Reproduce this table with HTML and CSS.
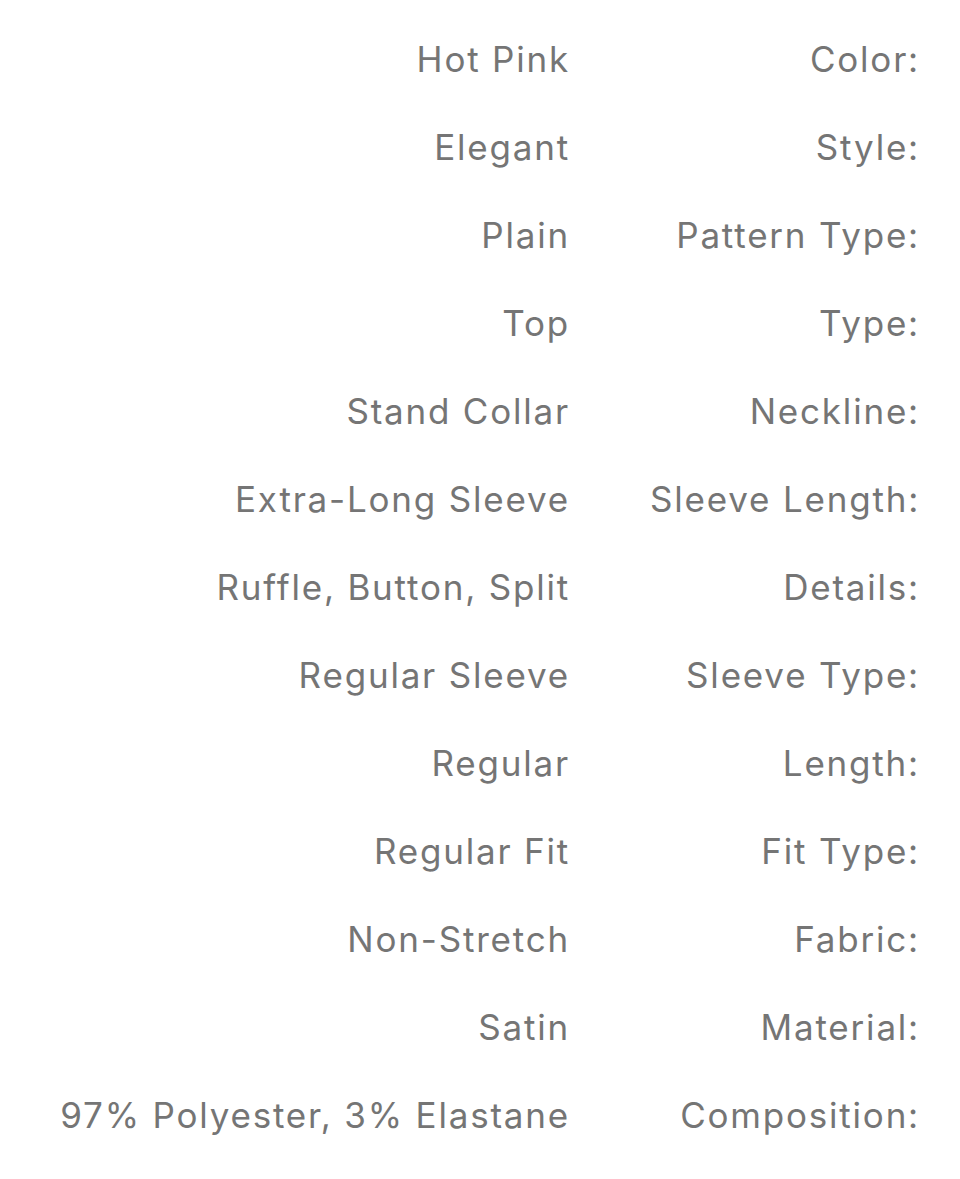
FILE: index.html
```html
<!DOCTYPE html>
<html>
<head>
<meta charset="utf-8">
<link rel="stylesheet" href="styles.css">
</head>
<body>
<div class="specs">
  <div class="val">Hot Pink</div><div class="key">Color:</div>
  <div class="val">Elegant</div><div class="key">Style:</div>
  <div class="val">Plain</div><div class="key">Pattern Type:</div>
  <div class="val">Top</div><div class="key">Type:</div>
  <div class="val">Stand Collar</div><div class="key">Neckline:</div>
  <div class="val">Extra-Long Sleeve</div><div class="key">Sleeve Length:</div>
  <div class="val">Ruffle, Button, Split</div><div class="key">Details:</div>
  <div class="val">Regular Sleeve</div><div class="key">Sleeve Type:</div>
  <div class="val">Regular</div><div class="key">Length:</div>
  <div class="val">Regular Fit</div><div class="key">Fit Type:</div>
  <div class="val">Non-Stretch</div><div class="key">Fabric:</div>
  <div class="val">Satin</div><div class="key">Material:</div>
  <div class="val">97% Polyester, 3% Elastane</div><div class="key">Composition:</div>
</div>
</body>
</html>
```
FILE: styles.css
```css
html, body {
  margin: 0;
  padding: 0;
  background: #ffffff;
}
body {
  font-family: Inter, "Liberation Sans", sans-serif;
  color: #757575;
}
.specs {
  display: grid;
  grid-template-columns: 1fr 270px;
  column-gap: 80px;
  padding: 15px 40px 0 0;
  font-size: 35px;
  line-height: 88px;
  letter-spacing: 1.8px;
  text-align: right;
  white-space: nowrap;
}
```
